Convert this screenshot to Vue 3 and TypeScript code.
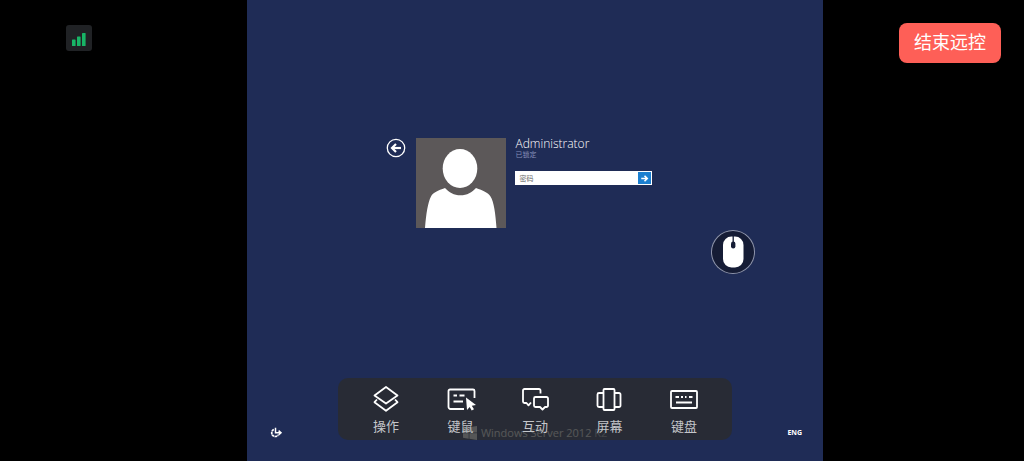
<script setup lang="ts">
import { ref } from 'vue'

type ToolId = 'actions' | 'input' | 'interact' | 'screen' | 'keyboard'

interface Tool {
  id: ToolId
  label: string
}

const tools: Tool[] = [
  { id: 'actions', label: '操作' },
  { id: 'input', label: '键鼠' },
  { id: 'interact', label: '互动' },
  { id: 'screen', label: '屏幕' },
  { id: 'keyboard', label: '键盘' },
]

const password = ref('')
</script>

<template>
  <div class="session">
    <aside class="side side-left">
      <button class="signal" type="button" aria-label="网络信号">
        <svg viewBox="0 0 26 26" aria-hidden="true">
          <rect x="6" y="14.500" width="3.600" height="6.500" rx="0.600" />
          <rect x="11" y="11.500" width="3.600" height="9.500" rx="0.600" />
          <rect x="16" y="8" width="3.600" height="13" rx="0.600" />
        </svg>
      </button>
    </aside>

    <main class="desktop">
      <form class="login" @submit.prevent>
        <button class="back" type="button" aria-label="返回">
          <svg viewBox="0 0 20 20" aria-hidden="true">
            <circle cx="10" cy="10" r="8.700" fill="none" stroke="#fff" stroke-width="1.300" />
            <path d="M15 10H7" fill="none" stroke="#fff" stroke-width="2.200" />
            <path d="M10 6L6 10l4 4" fill="none" stroke="#fff" stroke-width="2.200" />
          </svg>
        </button>
        <svg class="avatar" viewBox="0 0 90 90" aria-hidden="true">
          <rect width="90" height="90" fill="#5c5859" />
          <ellipse cx="44" cy="30.500" rx="17.300" ry="19.500" fill="#fff" />
          <path
            d="M9 90C10 76 12 64 15 58.500C17 54.500 22 52.500 29 50C33 54.500 38 57.300 44.500 57.300C51 57.300 56 54.500 60 50C67 52.500 72 54.500 74.500 58.500C78 64 79.500 76 80.500 90Z"
            fill="#fff"
          />
        </svg>
        <div class="account">
          <h1 class="name">Administrator</h1>
          <p class="state">已锁定</p>
          <div class="field">
            <input v-model="password" type="password" placeholder="密码" aria-label="密码" />
            <button class="submit" type="submit" aria-label="登录">
              <svg viewBox="0 0 12 12" aria-hidden="true">
                <path d="M3 6H8M6 3.500L8.500 6L6 8.500" fill="none" stroke="#fff" stroke-width="1.500" />
              </svg>
            </button>
          </div>
        </div>
      </form>

      <footer class="statusbar">
        <button class="access" type="button" aria-label="轻松使用">
          <svg viewBox="0 0 14 12" aria-hidden="true">
            <path d="M4.800 2.600A3.600 3.600 0 1 0 9.200 8" fill="none" stroke="#fff" stroke-width="1.700" stroke-dasharray="2.400 0.500" />
            <path d="M6.500 0.800V5.800H12M9.600 3.600L12 5.800L9.600 8" fill="none" stroke="#fff" stroke-width="1.500" />
          </svg>
        </button>
        <div class="brand">
          <svg viewBox="0 0 16 16" aria-hidden="true">
            <path d="M0 2.500L6.500 1.500V7.500H0ZM7.300 1.400L16 0V7.500H7.300ZM0 8.300H6.500V14.500L0 13.500ZM7.300 8.300H16V16L7.300 14.600Z" />
          </svg>
          <span>Windows Server 2012 <span class="edition">R2</span></span>
        </div>
        <button class="lang" type="button">ENG</button>
      </footer>

      <button class="mouse" type="button" aria-label="鼠标">
        <svg viewBox="0 0 44 44" aria-hidden="true">
          <rect x="12" y="6.500" width="20.500" height="31" rx="8.500" fill="#fff" />
          <path d="M22.200 6V13" stroke="#151c35" stroke-width="1.300" />
          <rect x="20" y="11.500" width="4.400" height="7" rx="2.200" fill="#151c35" />
        </svg>
      </button>

      <nav class="toolbar" aria-label="远控工具">
        <button v-for="tool in tools" :key="tool.id" class="tool" type="button">
          <svg viewBox="0 0 30 28" aria-hidden="true">
            <g v-if="tool.id === 'actions'">
              <path d="M15 2L26.500 10.500L15 18.500L3.500 10.500Z" />
              <path d="M6 14.500L3.500 17.200L15 25.800L26.500 17.200L24 14.500" />
            </g>
            <g v-else-if="tool.id === 'input'">
              <path d="M18 24H4.500A2 2 0 0 1 2.500 22V6A1.500 1.500 0 0 1 4 4.500H27A1.500 1.500 0 0 1 28.500 6V13" />
              <path d="M7.500 10.500H11M13.500 10.500H18.500M7.500 16.500H17" />
              <path class="solid" d="M20 12.500L30 20L25.800 20.800L28 24.300L25.700 25.500L23.700 21.900L21 25Z" />
            </g>
            <g v-else-if="tool.id === 'interact'">
              <path d="M20.500 8.500V5.500A1.500 1.500 0 0 0 19 4H4.500A1.500 1.500 0 0 0 3 5.500V16.500A1.500 1.500 0 0 0 4.500 18H6.500L8.500 20.300L11 17.500" />
              <path d="M15.500 12H26.500A1.500 1.500 0 0 1 28 13.500V20.500A1.500 1.500 0 0 1 26.500 22H25L22.500 24.500L20 22H15.500A1.500 1.500 0 0 1 14 20.500V13.500A1.500 1.500 0 0 1 15.500 12Z" />
            </g>
            <g v-else-if="tool.id === 'screen'">
              <rect x="9.500" y="4" width="11" height="21" rx="1" />
              <path d="M9.500 8H5A1.500 1.500 0 0 0 3.500 9.500V20.500A1.500 1.500 0 0 0 5 22H9.500M20.500 8H25A1.500 1.500 0 0 1 26.500 9.500V20.500A1.500 1.500 0 0 1 25 22H20.500" />
            </g>
            <g v-else>
              <rect x="2" y="6" width="26" height="17" rx="1" />
              <path d="M6.500 12H10M12 12H14M16 12H17.500M20 12H23.500M7 17.500H23" />
            </g>
          </svg>
          <span>{{ tool.label }}</span>
        </button>
      </nav>
    </main>

    <aside class="side side-right">
      <button class="end" type="button">结束远控</button>
    </aside>
  </div>
</template>

<style>
body {
  margin: 0;
  background: #000;
}
</style>

<style scoped>
.session {
  display: flex;
  height: 100vh;
  overflow: hidden;
  background: #000;
  font-family: "Liberation Sans", "Noto Sans CJK SC", sans-serif;
}

button {
  padding: 0;
  border: 0;
  background: none;
  font-family: inherit;
  cursor: pointer;
}

svg {
  display: block;
}

.side {
  display: flex;
  align-items: flex-start;
  min-width: 0;
}

.side-left {
  flex: 247 1 0;
}

.side-right {
  flex: 201 1 0;
  justify-content: flex-end;
}

.signal {
  width: 26px;
  height: 26px;
  margin: 25px 0 0 66px;
  border-radius: 3px;
  background: #202225;
}

.signal svg {
  fill: #18b566;
}

.end {
  margin: 23px 23px 0 0;
  padding: 0 15px;
  border-radius: 8px;
  background: #fe5f57;
  color: #fff;
  font-size: 18px;
  line-height: 40px;
  white-space: nowrap;
}

.desktop {
  position: relative;
  flex: none;
  display: flex;
  flex-direction: column;
  justify-content: space-between;
  height: 100%;
  aspect-ratio: 5 / 4;
  background: #1f2c56;
  color: #fff;
}

.login {
  display: flex;
  align-items: flex-start;
  justify-content: center;
  padding: 138px 31px 0 0;
}

.back {
  width: 20px;
  margin-right: 10px;
}

.avatar {
  width: 90px;
  height: 90px;
  margin-right: 9px;
}

.account {
  width: 137px;
}

.name {
  margin: 0;
  font-family: "Open Sans", sans-serif;
  font-size: 12px;
  font-weight: 300;
  line-height: 12px;
}

.state {
  margin: 0 0 11px;
  color: #8790b8;
  font-size: 7px;
  line-height: 10px;
}

.field {
  display: flex;
  box-sizing: border-box;
  height: 14px;
  border: 1px solid #fff;
  background: #fff;
}

.field input {
  flex: 1;
  min-width: 0;
  padding: 0 3px;
  border: 0;
  outline: 0;
  background: none;
  color: #333;
  font-family: inherit;
  font-size: 7px;
}

.field input::placeholder {
  color: #666;
}

.submit {
  width: 13px;
  background: #1b7fd0;
}

.statusbar {
  display: flex;
  align-items: center;
  justify-content: space-between;
  height: 16px;
  padding: 0 21px 20px 22px;
}

.access {
  width: 14px;
}

.brand {
  display: flex;
  align-items: center;
  gap: 4px;
  font-family: "Open Sans", sans-serif;
  font-size: 11px;
  line-height: 16px;
  white-space: nowrap;
}

.brand svg {
  width: 14px;
  fill: #fff;
}

.edition {
  opacity: 0.6;
}

.lang {
  color: #fff;
  font-family: "Open Sans", sans-serif;
  font-size: 7px;
  font-weight: 700;
  line-height: 16px;
}

.mouse {
  position: absolute;
  top: 230px;
  right: 68px;
  box-sizing: border-box;
  width: 44px;
  height: 44px;
  border-radius: 50%;
  background: #151c35;
  box-shadow: inset 0 0 0 1px #8e95ad;
}

.toolbar {
  position: absolute;
  right: 91px;
  bottom: 21px;
  left: 91px;
  display: flex;
  padding: 7px 11px 4px;
  border-radius: 10px;
  background: rgba(42, 44, 45, 0.8);
}

.tool {
  flex: 1;
  display: flex;
  flex-direction: column;
  align-items: center;
  gap: 5px;
  color: #c4c6ca;
  font-size: 13px;
  line-height: 18px;
}

.tool svg {
  width: 30px;
  height: 28px;
  fill: none;
  stroke: #fff;
  stroke-width: 1.8;
  stroke-linejoin: round;
}

.tool .solid {
  fill: #fff;
  stroke: none;
}
</style>
